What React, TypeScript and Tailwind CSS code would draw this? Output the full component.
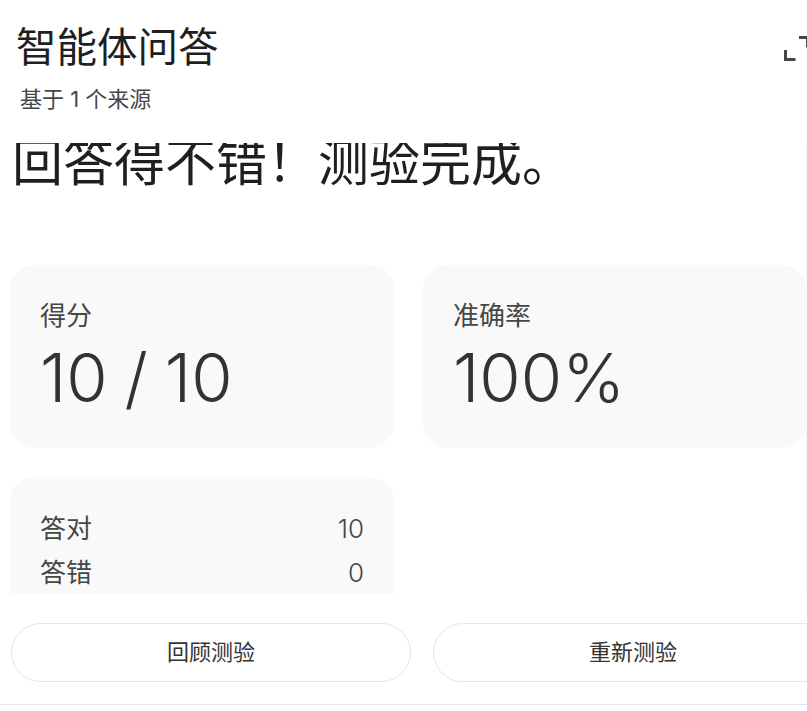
const cjk = "font-['Inter','Noto_Sans_CJK_SC',sans-serif]";

function StatCard({ label, value }: { label: string; value: string }) {
  return (
    <div className="h-[183px] rounded-[24px] bg-[#f9f9f9] px-[30px] pt-[33px]">
      <div className="text-[26px] leading-[36px] font-normal text-[#444746]">{label}</div>
      <div className="mt-[5px] text-[67px] leading-[78px] font-[350] [word-spacing:-2px] text-[#333333]">{value}</div>
    </div>
  );
}

function Row({ label, value }: { label: string; value: string }) {
  return (
    <div className="flex h-[44px] items-center justify-between text-[26px] font-normal text-[#444746]">
      <span>{label}</span>
      <span className="font-light">{value}</span>
    </div>
  );
}

export default function App() {
  return (
    <div className={`${cjk} flex h-[711px] w-[807px] flex-col overflow-hidden bg-white`}>
      <header className="flex h-[143px] shrink-0 flex-col">
        <div className="flex items-start justify-between pl-[16px] pt-[20px]">
          <h1 className="text-[40.5px] leading-[56px] font-normal text-[#1f1f1f]">智能体问答</h1>
          <svg className="mt-[15px] h-[26px] w-[23px] shrink-0" viewBox="0 0 23 26" fill="none" stroke="#444746" strokeWidth="3">
            <path d="M1.5 15v9.5h10" />
            <path d="M15 2.5h8.5v10" />
          </svg>
        </div>
        <div className="mt-[8px] pl-[20px] text-[22px] leading-[30px] font-normal text-[#444746]">基于 1 个来源</div>
      </header>
      <main className="h-[451px] shrink-0 overflow-hidden border-r border-[#f8f8f8] pl-[10px]">
        <h2 className="-mt-[7px] pl-[2px] text-[51px] leading-[54px] font-normal text-[#1f1f1f]">回答得不错！测验完成。</h2>
        <div className="mt-[75px] grid w-[796px] grid-cols-[384px_383px] gap-x-[29px] gap-y-[29px]">
          <StatCard label="得分" value="10 / 10" />
          <StatCard label="准确率" value="100%" />
          <div className="h-[160px] rounded-[24px] bg-[#f9f9f9] px-[30px] pt-[29px]">
            <Row label="答对" value="10" />
            <Row label="答错" value="0" />
          </div>
        </div>
      </main>
      <footer className="flex shrink-0 gap-[22px] pl-[11px] pt-[29px]">
        <button className="h-[59px] w-[400px] shrink-0 rounded-full border border-[#e3e6f0] bg-white text-[22px] font-normal text-[#333333]">回顾测验</button>
        <button className="h-[59px] w-[400px] shrink-0 rounded-full border border-[#e3e6f0] bg-white text-[22px] font-normal text-[#333333]">重新测验</button>
      </footer>
      <div className="mt-[22px] h-px w-full shrink-0 bg-[#e3e6f4]" />
    </div>
  );
}
